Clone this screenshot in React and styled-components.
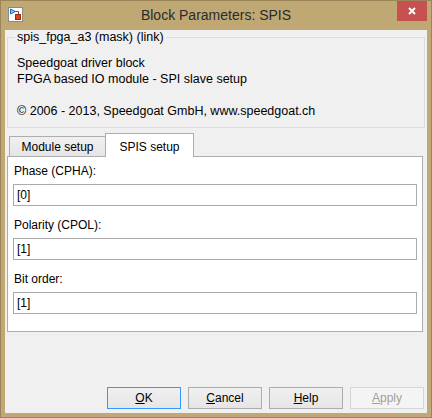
import styled, { createGlobalStyle } from 'styled-components';

const GlobalStyle = createGlobalStyle`
  html, body {
    margin: 0;
    padding: 0;
    background: #ffffff;
  }
  body {
    font-family: "Liberation Sans", Arial, sans-serif;
    font-size: 12px;
    color: #000;
  }
`;

const Window = styled.div`
  width: 432px;
  height: 418px;
  box-sizing: border-box;
  background: #c0a874;
  border: 1px solid #9c8659;
  padding: 0 4px 4px;
  display: flex;
  flex-direction: column;
`;

const TitleBar = styled.div`
  height: 29px;
  flex-shrink: 0;
  display: grid;
  grid-template-columns: 1fr auto 1fr;
`;

const AppIcon = styled.svg`
  margin: 6px 0 0 3px;
  justify-self: start;
`;

const Title = styled.div`
  font-size: 14px;
  line-height: 28px;
  color: #2b2b2b;
  white-space: nowrap;
`;

const CloseButton = styled.div`
  justify-self: end;
  width: 30px;
  height: 20px;
  background: #c75050;
  display: flex;
  align-items: center;
  justify-content: center;
`;

const Client = styled.div`
  flex: 1;
  background: #f0f0f0;
  padding: 0 2px;
  display: flex;
  flex-direction: column;
`;

const GroupBox = styled.fieldset`
  margin: 0;
  padding: 10px 9px 8px;
  border: 1px solid #dcdcdc;
  min-width: 0;
  font-size: 12.5px;
`;

const Legend = styled.legend`
  padding: 0 2px;
  margin-left: -2px;
  line-height: 15px;
`;

const Line = styled.div`
  line-height: 16px;
  height: 16px;
  white-space: nowrap;
`;

const TabStrip = styled.div`
  margin-top: 5px;
  padding-left: 2px;
  display: flex;
  align-items: flex-end;
`;

const Tab = styled.div`
  box-sizing: border-box;
  width: ${p => (p.$active ? 89 : 97)}px;
  height: ${p => (p.$active ? 24 : 20)}px;
  margin-left: ${p => (p.$active ? -1 : 0)}px;
  margin-bottom: ${p => (p.$active ? -1 : 0)}px;
  border: 1px solid #adadad;
  border-bottom: none;
  background: ${p => (p.$active ? '#ffffff' : 'linear-gradient(#f0f0f0, #e5e5e5)')};
  position: relative;
  z-index: ${p => (p.$active ? 1 : 0)};
  display: flex;
  align-items: center;
  justify-content: center;
  padding-top: ${p => (p.$active ? 2 : 0)}px;
  line-height: 16px;
`;

const Panel = styled.div`
  margin-right: 2px;
  border: 1px solid #adadad;
  background: #ffffff;
  padding: 6px 5px 17px;
  display: flex;
  flex-direction: column;
  gap: 11px;
`;

const Field = styled.div`
  display: flex;
  flex-direction: column;
  gap: 5px;
`;

const Label = styled.div`
  line-height: 16px;
  padding-left: 1px;
`;

const TextInput = styled.input`
  box-sizing: border-box;
  height: 22px;
  width: 100%;
  margin: 0;
  border: 1px solid #ababab;
  padding: 0 3px;
  font: 12px "Liberation Sans", Arial, sans-serif;
  color: #000;
  background: #fff;
  outline: none;
`;

const Spacer = styled.div`
  flex: 1;
`;

const ButtonRow = styled.div`
  display: flex;
  justify-content: flex-end;
  gap: 7px;
  padding-right: 1px;
  margin-bottom: 4px;
`;

const Button = styled.button`
  width: 74px;
  height: 22px;
  box-sizing: border-box;
  padding: 0;
  font: 12px "Liberation Sans", Arial, sans-serif;
  color: ${p => (p.disabled ? '#a0a0a0' : '#000000')};
  border: 1px solid ${p => (p.$default ? '#3399ff' : p.disabled ? '#d5d5d5' : '#adadad')};
  background: ${p => (p.disabled ? '#f4f4f4' : 'linear-gradient(#f0f0f0, #e5e5e5)')};
`;

const fields = [
  { label: 'Phase (CPHA):', value: '[0]' },
  { label: 'Polarity (CPOL):', value: '[1]' },
  { label: 'Bit order:', value: '[1]' },
];

function BlockIcon() {
  return (
    <AppIcon width="15" height="15" viewBox="0 0 15 15">
      <rect x="0.5" y="0.5" width="14" height="14" fill="#ffffff" stroke="#8a8a8a" />
      <path d="M7 4.5 H10.5 V8" fill="none" stroke="#555" strokeWidth="1" />
      <path d="M2.5 2 L7.5 4.5 L2.5 7 Z" fill="#7fc4f4" stroke="#1d6fc0" strokeWidth="1" />
      <rect x="7.5" y="7.5" width="5" height="5" fill="#e0401c" stroke="#9a2a10" strokeWidth="1" />
    </AppIcon>
  );
}

export default function App() {
  return (
    <>
      <GlobalStyle />
      <Window>
        <TitleBar>
          <BlockIcon />
          <Title>Block Parameters: SPIS</Title>
          <CloseButton>
            <svg width="8" height="8" viewBox="0 0 8 8">
              <path d="M1 1 L7 7 M7 1 L1 7" stroke="#ffffff" strokeWidth="2" />
            </svg>
          </CloseButton>
        </TitleBar>
        <Client>
          <GroupBox>
            <Legend>spis_fpga_a3 (mask) (link)</Legend>
            <Line>Speedgoat driver block</Line>
            <Line>FPGA based IO module - SPI slave setup</Line>
            <Line />
            <Line>© 2006 - 2013, Speedgoat GmbH, www.speedgoat.ch</Line>
          </GroupBox>
          <TabStrip>
            <Tab>Module setup</Tab>
            <Tab $active>SPIS setup</Tab>
          </TabStrip>
          <Panel>
            {fields.map(f => (
              <Field key={f.label}>
                <Label>{f.label}</Label>
                <TextInput readOnly value={f.value} />
              </Field>
            ))}
          </Panel>
          <Spacer />
          <ButtonRow>
            <Button $default><u>O</u>K</Button>
            <Button><u>C</u>ancel</Button>
            <Button><u>H</u>elp</Button>
            <Button disabled><u>A</u>pply</Button>
          </ButtonRow>
        </Client>
      </Window>
    </>
  );
}
